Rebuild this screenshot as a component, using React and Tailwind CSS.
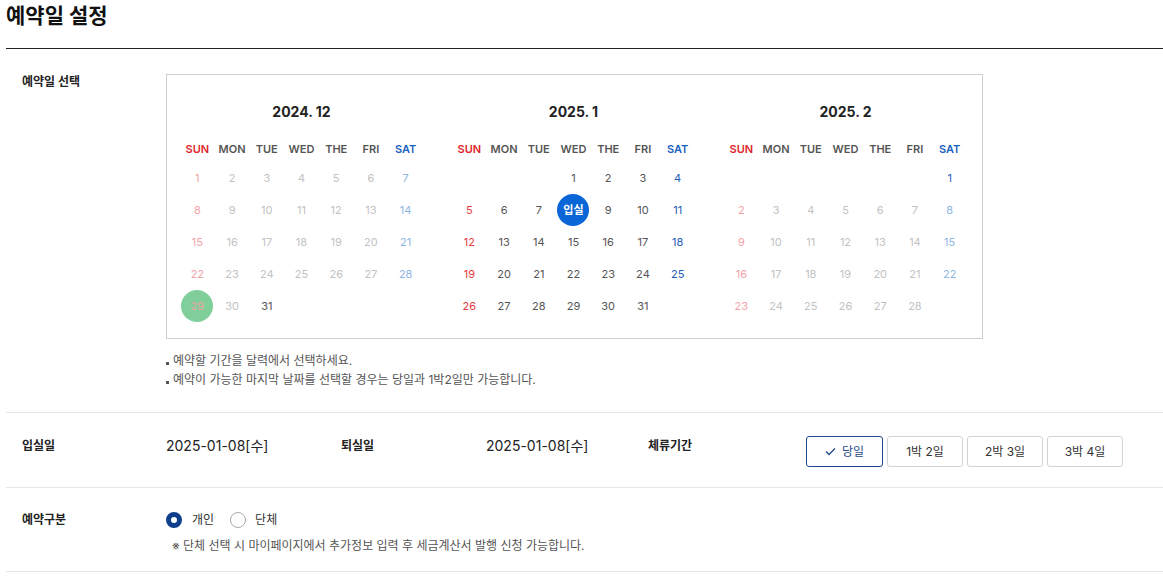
import React from 'react';

const DAYS = ['SUN', 'MON', 'TUE', 'WED', 'THE', 'FRI', 'SAT'];

const months = [
   { title: '2024. 12', offset: 0, count: 31, active: d => d === 31, green: 29 },
   { title: '2025. 1', offset: 3, count: 31, active: () => true, selected: 8 },
   { title: '2025. 2', offset: 6, count: 28, active: d => d === 1 },
];

const dayColor = (col, active) => {
   if (col === 0) return active ? 'text-[#e23b40]' : 'text-[#f0a3a7]';
   if (col === 6) return active ? 'text-[#1c5db7]' : 'text-[#8db6e2]';
   return active ? 'text-[#555]' : 'text-[#c2c2c2]';
};

const Month = ({ month }) => {
   const cells = [];
   for (let i = 0; i < month.offset; i++) cells.push(null);
   for (let d = 1; d <= month.count; d++) cells.push(d);

   return (
      <div className="w-[243px]">
         <h4 className="text-center text-[14px] leading-[20px] font-bold text-[#222] mb-[15px]">{month.title}</h4>
         <div className="grid grid-cols-7 h-[25px] items-center">
            {DAYS.map((d, i) => (
               <span key={d} className={`text-center text-[11px] font-semibold ${i === 0 ? 'text-[#e0262f]' : i === 6 ? 'text-[#1b5fc0]' : 'text-[#555]'}`}>{d}</span>
            ))}
         </div>
         <div className="grid grid-cols-7">
            {cells.map((d, i) => {
               if (!d) return <span key={i} className="h-[32px]" />;
               const col = i % 7;
               const isActive = month.active(d);
               if (month.selected === d) {
                  return (
                     <span key={i} className="h-[32px] flex items-center justify-center">
                        <span className="w-[32px] h-[32px] rounded-full bg-[#0a66d6] text-white text-[11px] font-bold flex items-center justify-center">입실</span>
                     </span>
                  );
               }
               if (month.green === d) {
                  return (
                     <span key={i} className="h-[32px] flex items-center justify-center">
                        <span className="w-[32px] h-[32px] rounded-full bg-[#80cf9b] text-[#eaa4a4] text-[11px] flex items-center justify-center">{d}</span>
                     </span>
                  );
               }
               return (
                  <span key={i} className={`h-[32px] flex items-center justify-center text-[11px] font-normal ${dayColor(col, isActive)}`}>{d}</span>
               );
            })}
         </div>
      </div>
   );
};

const Label = ({ children, className = '' }) => (
   <span className={`text-[12px] font-bold text-[#222] ${className}`}>{children}</span>
);

const App = () => {
   return (
      <div className="w-[1163px] h-[577px] bg-white pl-[6px] overflow-hidden" style={{ fontFamily: 'Inter, "Noto Sans CJK KR", sans-serif' }}>
         <div className="h-[49px] border-b border-[#222]">
            <h2 className="text-[21px] leading-[31px] font-bold text-[#111]">예약일 설정</h2>
         </div>

         {/* 예약일 선택 */}
         <div className="flex pt-[25px] pb-[23px] border-b border-[#e6e6e6]">
            <Label className="w-[160px] pl-[16px] leading-[16px]">예약일 선택</Label>
            <div>
               <div className="w-[817px] border border-[#cfcfcf] pt-[27px] pb-[16px] pl-[13px] flex gap-[29px]">
                  {months.map(m => <Month key={m.title} month={m} />)}
               </div>
               <ul className="mt-[12px] text-[12px] leading-[19px] text-[#555]">
                  <li className="flex items-center">
                     <span className="w-[3px] h-[3px] bg-[#555] mt-[5px] mr-[4px]" />
                     예약할 기간을 달력에서 선택하세요.
                  </li>
                  <li className="flex items-center">
                     <span className="w-[3px] h-[3px] bg-[#555] mt-[5px] mr-[4px]" />
                     예약이 가능한 마지막 날짜를 선택할 경우는 당일과 1박2일만 가능합니다.
                  </li>
               </ul>
            </div>
         </div>

         {/* 입실일 / 퇴실일 / 체류기간 */}
         <div className="flex items-start pt-[23px] pb-[20px] border-b border-[#e6e6e6]">
            <Label className="w-[160px] pl-[16px] leading-[20px]">입실일</Label>
            <span className="w-[175px] text-[14px] leading-[20px] text-[#222]">2025-01-08[수]</span>
            <Label className="w-[145px] leading-[20px]">퇴실일</Label>
            <span className="w-[162px] text-[14px] leading-[20px] text-[#222]">2025-01-08[수]</span>
            <Label className="w-[158px] leading-[20px]">체류기간</Label>
            <div className="flex gap-[4px]">
               <button className="w-[77px] h-[31px] rounded-[3px] border border-[#1f4a8a] bg-white text-[#1f4a8a] text-[12px] flex items-center justify-center gap-[6px]">
                  <svg width="11" height="9" viewBox="0 0 11 9" fill="none"><path d="M1 4.5L4 7.5L10 1.5" stroke="#1f4a8a" strokeWidth="1.3" /></svg>
                  당일
               </button>
               {['1박 2일', '2박 3일', '3박 4일'].map(t => (
                  <button key={t} className="w-[76px] h-[31px] rounded-[3px] border border-[#d4d4d4] bg-white text-[#333] text-[12px]">{t}</button>
               ))}
            </div>
         </div>

         {/* 예약구분 */}
         <div className="flex pt-[24px] pb-[16px] border-b border-[#e6e6e6]">
            <Label className="w-[160px] pl-[16px] leading-[16px]">예약구분</Label>
            <div>
               <div className="flex items-center h-[16px] text-[12px] text-[#333]">
                  <span className="w-[16px] h-[16px] rounded-full border-[5px] border-[#0f3f8c] bg-white" />
                  <span className="ml-[10px]">개인</span>
                  <span className="ml-[16px] w-[16px] h-[16px] rounded-full border border-[#aaa] bg-white" />
                  <span className="ml-[9px]">단체</span>
               </div>
               <p className="mt-[9px] pl-[6px] text-[12px] leading-[18px] text-[#555]">※ 단체 선택 시 마이페이지에서 추가정보 입력 후 세금계산서 발행 신청 가능합니다.</p>
            </div>
         </div>
      </div>
   );
};

export default App;
